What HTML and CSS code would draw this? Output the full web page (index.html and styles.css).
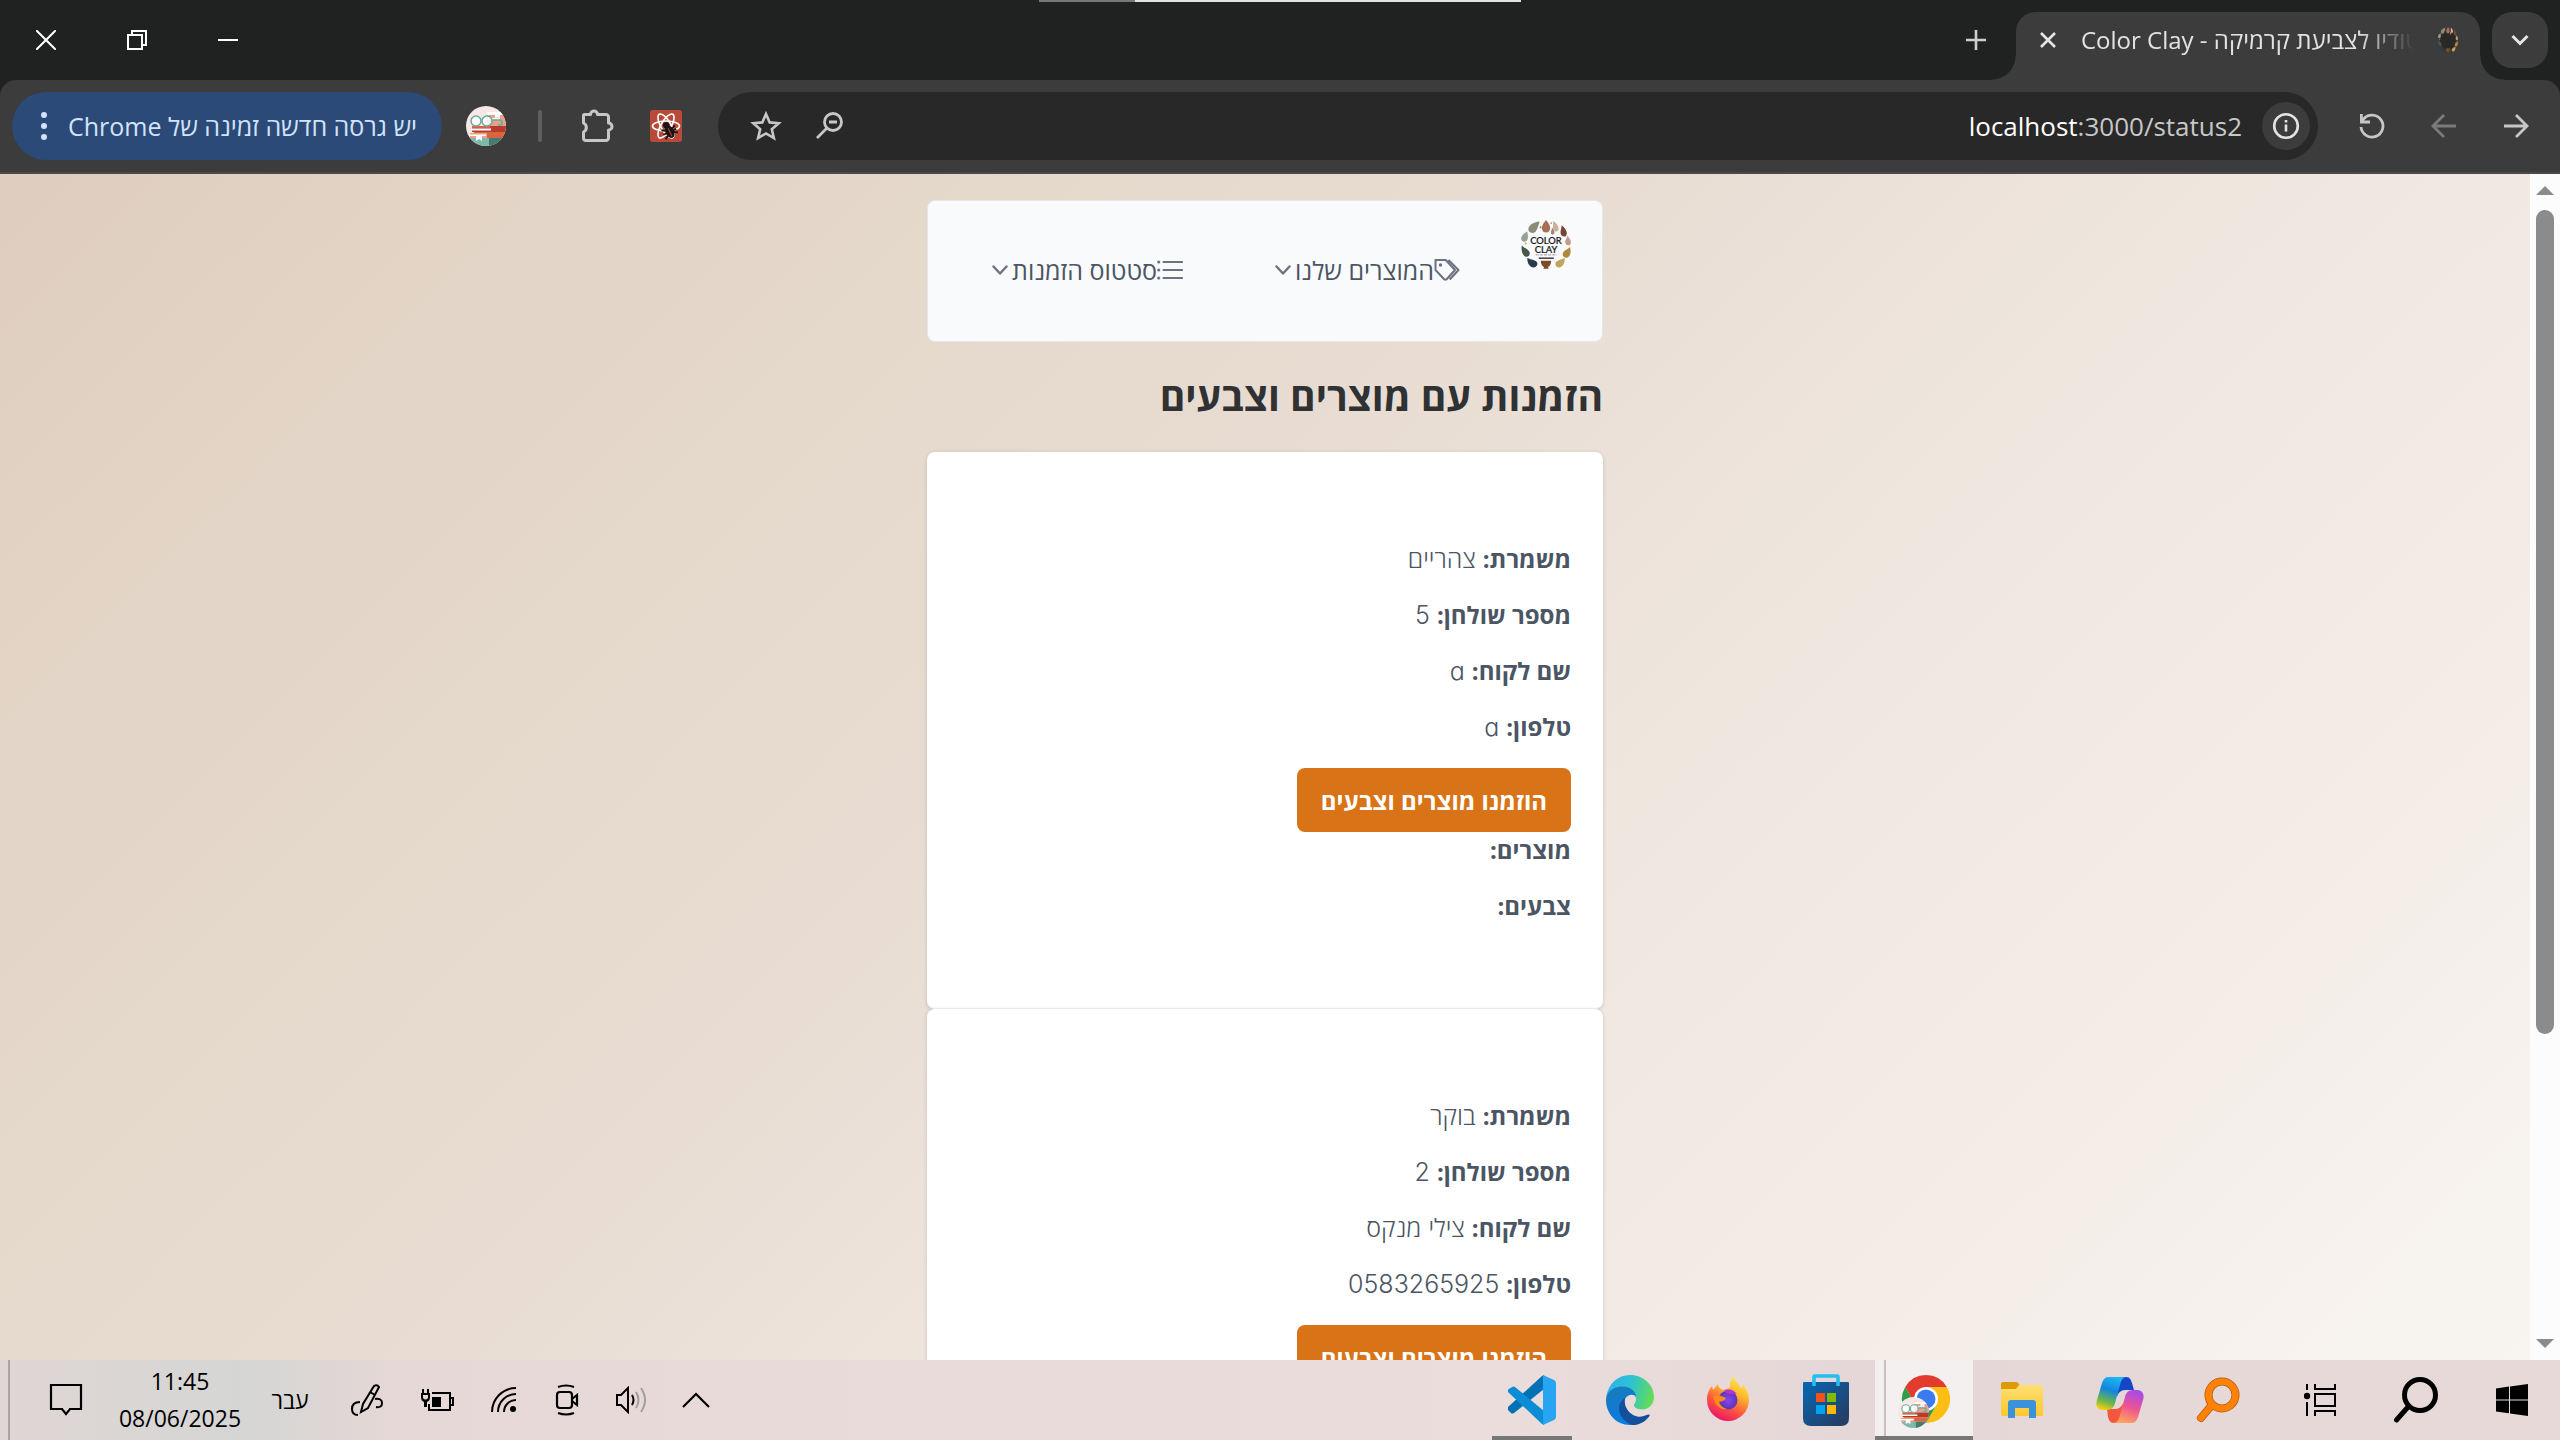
FILE: index.html
```html
<!DOCTYPE html>
<html lang="he" dir="rtl">
<head>
<meta charset="utf-8">
<title>Color Clay - סטודיו לצביעת קרמיקה</title>
<link rel="stylesheet" href="styles.css">
</head>
<body>
<svg class="defs" width="0" height="0" aria-hidden="true">
  <defs>
    <symbol id="clay-ring" viewBox="0 0 48 48">
      <path d="M24 0c2.500 3 4 5.500 4 8a4 4 0 0 1-8 0c0-2.500 1.500-5 4-8z" fill="#a96f55"/>
      <path d="M31 1c3 2 5.500 5 5 8-.6 2.600-4 2.600-5 0-.8-2.500 0-5 0-8z" fill="#cfae9b"/>
      <path d="M39 5c4 3 6 7 4.500 9.800-1.500 2.200-5 1-5.500-1.800-.4-2.600 1-5 1-8z" fill="#774736"/>
      <path d="M44.500 15c3 3 4.300 6.500 2.800 8.500-1.700 1.700-4.600.5-4.800-2-.2-2.200 1.600-4 2-6.500z" fill="#c39a84"/>
      <path d="M47 26c1.400 4.500.5 8-1.800 9.700-2.800 1.500-5.500-.5-5.100-3.400.5-2.900 4.400-3.800 6.900-6.300z" fill="#b0883c"/>
      <path d="M42 36.500c0 4.500-1 7.500-4.200 8.800-2.900 1-5.300-1.300-4.600-4 .9-2.700 5.600-3.100 8.800-4.800z" fill="#c0a55c"/>
      <path d="M6 36.500c0 4.500 1.700 7.800 4.800 8.900 3 .9 5.600-1.500 4.800-4.300-1-2.800-6-2.800-9.600-4.600z" fill="#2b3a4a"/>
      <path d="M.8 24.500c-.8 5 .4 8.500 2.700 10.300 2.600 1.500 5.200-.3 4.900-3.300-.4-2.900-4.800-4.200-7.600-7z" fill="#44574a"/>
      <path d="M6 11c-4.500 2.500-6.300 5-5.700 7.600.7 2.500 4.200 3 5.700.7 1.300-2.100.5-5 0-8.300z" fill="#97a097"/>
      <path d="M18 1.500c-5.500.6-10.200 3-10.900 7-.4 3.300 3.800 5.300 6.600 2.900 2.500-2.200 2.500-5.600 4.300-9.900z" fill="#8a8c76"/>
      <path d="M30 7.500c1.600 2 2.300 4 2 5.300-.7 1.700-2.900 1.400-3.300-.1-.3-1.600.8-3.200 1.300-5.200z" fill="#9c8878"/>
      <circle cx="4.500" cy="22.500" r="1" fill="#c9a94e"/>
      <circle cx="18.800" cy="7" r=".9" fill="#7b8070"/>
      <circle cx="29" cy="3" r=".8" fill="#b4886f"/>
      <path d="M19 39h10c0 3-1.500 5.600-3 6.200l.5 1.600h-5l.6-1.600c-1.800-.8-3.100-3.200-3.100-6.200z" fill="#7e4a26"/>
    </symbol>
    <symbol id="clay-logo" viewBox="0 0 48 48">
      <use href="#clay-ring"/>
      <path d="M17 36h14.500v1.300H17z" fill="#2c2622"/>
      <path d="M14 33.500h20.500" stroke="#777" stroke-width=".7" stroke-dasharray="3 1"/>
      <text x="24" y="23.500" class="logo-text">COLOR</text>
      <text x="24" y="31.500" class="logo-text">CLAY</text>
    </symbol>
    <symbol id="chev" viewBox="0 0 16 16"><path d="M1.500 4.500L8 11.500l6.500-7" fill="none" stroke="currentColor" stroke-width="2.400" stroke-linecap="round" stroke-linejoin="round"/></symbol>
    <clipPath id="avatar-clip"><circle cx="20" cy="20" r="20"/></clipPath>
    <symbol id="avatar" viewBox="0 0 40 40">
      <g clip-path="url(#avatar-clip)">
        <path fill="#f6e9e5" d="M0 0h40v40H0z"/>
        <path fill="#e3a28c" d="M21 6h19v14H21z"/>
        <path fill="#fff" d="M21 6h19v3H21zM29 8h5v5l-2.500-2-2.500 2z"/>
        <path fill="#fff" d="M22 12h12v1.500H22z"/>
        <path fill="#b93a2c" d="M6 20h34v6H6z"/>
        <path fill="#d9604a" d="M6 20h18v2H6z"/>
        <path fill="#fff" d="M5 22.500h20v2H5z"/>
        <path fill="#d9653f" d="M8 26h32v6H8z"/>
        <path fill="#f0a080" d="M4 27h17v5H4z"/>
        <path fill="#fff" d="M3 28.500h17v1.500H3z"/>
        <path fill="#7fb8ab" d="M0 32h40v8H0z"/>
        <path fill="#4a7a6d" d="M23 32h17v8H23z"/>
        <path fill="#fff" d="M10 29h6v6l-3-2-3 2z"/>
        <g fill="#fffc" stroke="#6bab9f" stroke-width="1.500"><circle cx="10" cy="15" r="5"/><circle cx="21" cy="15" r="5"/><path fill="none" d="M26 14h8q3 1 2 4q-2 2-4 1"/></g>
      </g>
    </symbol>
  </defs>
</svg>

<header class="browser">
  <div class="tabstrip">
    <button class="tab-search" aria-label="חיפוש כרטיסיות"><svg width="18" height="16" viewBox="0 0 18 16"><path d="M1.500 4l7.500 7.500L16.500 4" fill="none" stroke="currentColor" stroke-width="3"/></svg></button>
    <div class="tab">
      <svg class="favicon" width="20" height="26" viewBox="0 0 20 26" aria-hidden="true"><ellipse cx="10" cy="13" rx="8" ry="10" fill="#2b2926"/><svg width="20" height="26" viewBox="0 0 48 48" preserveAspectRatio="none"><use href="#clay-ring"/></svg></svg>
      <span class="tab-title" dir="ltr">Color Clay - סטודיו לצביעת קרמיקה</span>
      <button class="plain" aria-label="סגירה"><svg width="18" height="18" viewBox="0 0 18 18"><path d="M2 2l14 14M16 2L2 16" stroke="#e6e6e6" stroke-width="2.600"/></svg></button>
    </div>
    <button class="plain new-tab" aria-label="כרטיסייה חדשה"><svg width="22" height="22" viewBox="0 0 22 22"><path d="M11 1v20M1 11h20" stroke="#d0d0d0" stroke-width="2.600"/></svg></button>
    <div class="loading"></div>
    <div class="window-buttons">
      <button class="plain" aria-label="מזעור"><svg width="20" height="20" viewBox="0 0 20 20"><path d="M0 10h20" stroke="#fff" stroke-width="2"/></svg></button>
      <button class="plain" aria-label="שחזור"><svg width="20" height="20" viewBox="0 0 20 20"><path d="M1 5h14v14H1zM5 5V1h14v14h-4" fill="none" stroke="#fff" stroke-width="2"/></svg></button>
      <button class="plain" aria-label="סגירת חלון"><svg width="20" height="20" viewBox="0 0 20 20"><path d="M0 0l20 20M20 0L0 20" stroke="#fff" stroke-width="2"/></svg></button>
    </div>
  </div>

  <div class="toolbar">
    <div class="nav-buttons">
      <button class="plain" aria-label="הבא"><svg width="28" height="28" viewBox="0 0 28 28"><path d="M2 14h23M14 3l11 11-11 11" fill="none" stroke="#c7c7c7" stroke-width="2.800"/></svg></button>
      <button class="plain" aria-label="הקודם"><svg width="28" height="28" viewBox="0 0 28 28"><path d="M26 14H3M14 3L3 14l11 11" fill="none" stroke="#7b7b7b" stroke-width="2.800"/></svg></button>
      <button class="plain" aria-label="טעינה מחדש"><svg width="28" height="28" viewBox="0 0 28 28"><path d="M3 15a11 11 0 1 0 2.500-8L3 9.500M3.400 2v8H12" fill="none" stroke="#c7c7c7" stroke-width="2.800"/></svg></button>
    </div>
    <div class="omnibox">
      <button class="site-info" aria-label="פרטי האתר"><svg width="28" height="28" viewBox="0 0 28 28"><circle cx="14" cy="14" r="11.800" fill="none" stroke="#e3e3e3" stroke-width="2.600"/><path d="M14 12.500v7M14 8v2.600" stroke="#e3e3e3" stroke-width="2.600"/></svg></button>
      <div class="url" dir="ltr"><b>localhost</b>:3000/status2</div>
      <button class="plain" aria-label="מרחק מתצוגה"><svg width="32" height="32" viewBox="0 0 32 32"><circle cx="19" cy="12" r="8.500" fill="none" stroke="#c7c7c7" stroke-width="2.800"/><path d="M13 18L3 28M15 12h8" stroke="#c7c7c7" stroke-width="2.800" fill="none"/></svg></button>
      <button class="plain" aria-label="הוספה למועדפים"><svg width="32" height="32" viewBox="0 0 32 32"><path d="M16 4l3.700 8.400 9 .8-6.900 6 2.100 8.900-7.900-4.700-7.900 4.700 2.100-8.900-6.900-6 9-.8z" fill="none" stroke="#c7c7c7" stroke-width="2.600"/></svg></button>
    </div>
    <div class="extensions">
      <svg width="32" height="32" viewBox="0 0 32 32" aria-hidden="true"><rect width="32" height="32" rx="3" fill="#b94a37"/><g fill="none" stroke="#fff" stroke-width="1.600"><ellipse cx="16" cy="16" rx="13.500" ry="5"/><ellipse cx="16" cy="16" rx="13.500" ry="5" transform="rotate(60 16 16)"/><ellipse cx="16" cy="16" rx="13.500" ry="5" transform="rotate(120 16 16)"/></g><g transform="rotate(-25 19 20)"><ellipse cx="19" cy="22" rx="4.300" ry="6.500" fill="#1c1414"/><circle cx="18.500" cy="14.500" r="3.200" fill="#1c1414"/><path d="M12 17l14 9M12 27l14-9M12 22h14" stroke="#1c1414" stroke-width="1.800"/><path d="M19 18v9" stroke="#b94a37"/></g></svg>
      <button class="plain" aria-label="תוספים"><svg width="34" height="36" viewBox="0 0 34 36"><path d="M4 6.500h6.500a3.500 3.500 0 0 1 7 0H26a2.500 2.500 0 0 1 2.500 2.500v6a3.500 3.500 0 0 1 0 7v8a2.500 2.500 0 0 1-2.500 2.500H6A2.500 2.500 0 0 1 3.500 30v-6a5 5 0 0 0 0-9V7z" fill="none" stroke="#c7c7c7" stroke-width="3" stroke-linejoin="round"/></svg></button>
    </div>
    <span class="divider"></span>
    <svg width="40" height="40" aria-hidden="true"><use href="#avatar"/></svg>
    <button class="update">יש גרסה חדשה זמינה של Chrome<svg width="8" height="28" viewBox="0 0 8 28"><g fill="#d3e3fd"><circle cx="4" cy="3" r="3"/><circle cx="4" cy="14" r="3"/><circle cx="4" cy="25" r="3"/></g></svg></button>
  </div>
</header>

<div class="viewport">
  <div class="scrollbar" aria-hidden="true">
    <span class="arrow up"></span>
    <span class="track"><span class="thumb"></span></span>
    <span class="arrow down"></span>
  </div>
  <main class="page">
    <div class="content">
      <nav class="menu">
        <svg width="50" height="50" role="img" aria-label="Color Clay"><use href="#clay-logo"/></svg>
        <a class="menu-item" href="#products">
          <svg width="26" height="24" viewBox="0 0 26 24"><path d="M1.500 2h10.200l9.300 10-8.600 9.500h-2L1.500 12zM14.500 2l10 10-8.800 9.500" fill="none" stroke="currentColor" stroke-width="2" stroke-linejoin="round"/><circle cx="6.500" cy="7" r="1.700" fill="currentColor"/></svg>
          <span>המוצרים שלנו</span>
          <svg class="chev" width="16" height="16"><use href="#chev"/></svg>
        </a>
        <a class="menu-item" href="#orders">
          <svg width="26" height="20" viewBox="0 0 26 20"><path d="M6.500 2H25M6.500 10H25M6.500 18H25" stroke="currentColor" stroke-width="2.200" stroke-linecap="round"/><g fill="currentColor"><circle cx="1.700" cy="2" r="1.600"/><circle cx="1.700" cy="10" r="1.600"/><circle cx="1.700" cy="18" r="1.600"/></g></svg>
          <span>סטטוס הזמנות</span>
          <svg class="chev" width="16" height="16"><use href="#chev"/></svg>
        </a>
      </nav>
      <h1>הזמנות עם מוצרים וצבעים</h1>
      <article class="order">
        <p><strong>משמרת:</strong> צהריים</p>
        <p><strong>מספר שולחן:</strong> 5</p>
        <p><strong>שם לקוח:</strong> a</p>
        <p><strong>טלפון:</strong> a</p>
        <button class="status">הוזמנו מוצרים וצבעים</button>
        <p><strong>מוצרים:</strong></p>
        <p><strong>צבעים:</strong></p>
      </article>
      <article class="order">
        <p><strong>משמרת:</strong> בוקר</p>
        <p><strong>מספר שולחן:</strong> 2</p>
        <p><strong>שם לקוח:</strong> צילי מנקס</p>
        <p><strong>טלפון:</strong> 0583265925</p>
        <button class="status">הוזמנו מוצרים וצבעים</button>
      </article>
    </div>
  </main>
</div>

<footer class="taskbar">
  <div class="system">
    <button class="task" aria-label="התחל"><svg width="32" height="32" viewBox="0 0 32 32"><path d="M0 4.500l13-1.900V15.500H0zM14 2.400L32 0v15.500H14zM0 16.500h13v12.800L0 27.500zM14 16.500h18V32l-18-2.400z"/></svg></button>
    <button class="task" aria-label="חיפוש"><svg width="44" height="48" viewBox="0 0 44 48"><circle cx="26" cy="19" r="15.500" fill="none" stroke="#000" stroke-width="5"/><path d="M14 31L2.500 44" stroke="#000" stroke-width="5" stroke-linecap="round"/></svg></button>
    <button class="task" aria-label="תצוגת משימות"><svg width="32" height="32" viewBox="0 0 32 32"><path d="M3 0v6M3 18v14M11 0v5h20V0M11 10h20v12H11zM11 32v-5h20v5" fill="none" stroke="#000" stroke-width="2"/><circle cx="3" cy="12" r="3.200"/></svg></button>
  </div>
  <div class="apps">
    <button class="task" aria-label="Everything"><svg width="44" height="48" viewBox="0 0 44 48"><g fill="none" stroke-linecap="round"><g stroke="#b45a12" stroke-width="8"><circle cx="26" cy="19" r="13.500"/><path d="M15 30L5 42"/></g><g stroke="#ff8204" stroke-width="6.500"><circle cx="26" cy="19" r="13.500"/><path d="M15 30L5 42"/></g></g></svg></button>
    <button class="task" aria-label="Copilot"><svg width="48" height="46" viewBox="0 0 48 46"><defs><linearGradient id="co1" x1=".6" y1="0" x2=".3" y2="1"><stop stop-color="#1fb4f5"/><stop offset=".4" stop-color="#1485dd"/><stop offset=".75" stop-color="#6cb54b"/><stop offset="1" stop-color="#f3cf0e"/></linearGradient><linearGradient id="co2" x1=".6" y1="0" x2=".3" y2="1"><stop stop-color="#a94be8"/><stop offset=".5" stop-color="#ee5490"/><stop offset="1" stop-color="#ffa75c"/></linearGradient></defs><path d="M22 0h8c4 0 5 3 6 6l2 7h-9c-4 0-7 3-8 7z" fill="#1546c8"/><path d="M26 46h-8c-4 0-5-3-6-6l-1-8h9c3 0 6-3 7-6z" fill="#f2583f"/><path d="M12 0h18c-4 1-5 4-6 8l-5 18c-1 4-3 7-8 7H7c-5 0-8-4-6-10L6 6c1-3 3-6 6-6z" fill="url(#co1)"/><path d="M36 46H18c4-1 5-4 6-8l5-18c1-4 3-7 8-7h4c5 0 8 4 6 10l-5 17c-1 3-3 6-6 6z" fill="url(#co2)"/></svg></button>
    <button class="task" aria-label="סייר הקבצים"><svg width="42" height="36" viewBox="0 0 42 36"><defs><linearGradient id="fo" x1="0" y1="0" x2="0" y2="1"><stop stop-color="#ffdf73"/><stop offset="1" stop-color="#fdc72f"/></linearGradient></defs><path d="M0 2q0-2 2-2h13q2 0 3 2l2 3h-4v4H0z" fill="#dc9a04"/><path d="M0 7h15l3-4h22q2 0 2 2v27q0 2-2 2H2q-2 0-2-2z" fill="url(#fo)"/><path d="M7 36V21q0-3 3-3h22q3 0 3 3v15h-7V26H14v10z" fill="#3a93da"/></svg></button>
    <button class="task active" aria-label="Google Chrome"><svg width="52" height="56" viewBox="0 0 52 56"><path d="M28 15h20.800A24 24 0 0 1 28 51l10.500-18z" fill="#fdbd12"/><path d="M7.200 15A24 24 0 0 0 28 51l10.400-18H17.600z" fill="#2a9e4b"/><path d="M7.200 15L17.600 33 28 15h20.800A24 24 0 0 0 7.200 15z" fill="#e33b2e"/><circle cx="28" cy="27" r="12" fill="#fff"/><circle cx="28" cy="27" r="9.500" fill="#3a7bef"/><svg x="0" y="25" width="31" height="31" viewBox="0 0 40 40"><use href="#avatar"/></svg></svg></button>
    <button class="task" aria-label="Microsoft Store"><svg width="46" height="52" viewBox="0 0 46 52"><defs><linearGradient id="st" x1="0" y1="0" x2="1" y2="1"><stop stop-color="#0568b4"/><stop offset="1" stop-color="#29395c"/></linearGradient></defs><path d="M0 9q0-1 1-1h44q1 0 1 1v35q0 8-8 8H8q-8 0-8-8z" fill="url(#st)"/><path d="M11 12V3q0-1 1-1h22q1 0 1 1v9" fill="none" stroke="#25bdf2" stroke-width="3.600"/><path fill="#f3511f" d="M13 19h9v9h-9z"/><path fill="#80ba01" d="M24 19h9v9h-9z"/><path fill="#02a4ef" d="M13 31h9v9h-9z"/><path fill="#ffb901" d="M24 31h9v9h-9z"/></svg></button>
    <button class="task" aria-label="Firefox"><svg width="42" height="46" viewBox="0 0 42 46"><defs><linearGradient id="ff" x1=".8" y1="0" x2=".3" y2="1"><stop stop-color="#fff04a"/><stop offset=".35" stop-color="#ffb52c"/><stop offset=".65" stop-color="#ff5a3a"/><stop offset="1" stop-color="#e8106c"/></linearGradient><radialGradient id="fp"><stop stop-color="#8a45f4"/><stop offset="1" stop-color="#5b34b5"/></radialGradient></defs><path d="M27 0c1 4 5 7 7 11 2-1 2-2 2-3 5 5 6 11 6 15a21 21 0 0 1-42 0c0-5 1-9 5-14l1 4 5-6c0 3 2 5 5 6 3-2 7-1 7-4 0-4 1-7 4-9z" fill="url(#ff)"/><circle cx="21" cy="23" r="9.500" fill="url(#fp)"/><path d="M6 20c4-3 9-1 13 1-1 3-4 3-7 4 1 3 4 6 8 7-6 1-12-3-14-12z" fill="#ff8a1c"/><path d="M17 14c5-3 10-1 13 3-3-1-5 0-7 0-3 0-4-2-6-3z" fill="#b532d8"/></svg></button>
    <button class="task" aria-label="Microsoft Edge"><svg width="48" height="50" viewBox="0 0 48 48" preserveAspectRatio="none"><defs><linearGradient id="e1" x1="0" y1=".3" x2="1" y2=".5"><stop stop-color="#2eb2ee"/><stop offset=".5" stop-color="#2cc3d0"/><stop offset="1" stop-color="#65dc55"/></linearGradient><linearGradient id="e2" x1="0" y1="0" x2=".4" y2="1"><stop stop-color="#1b7ab9"/><stop offset="1" stop-color="#0a7ce0"/></linearGradient></defs><path d="M0 22C2 8 12 0 24 0c14 0 24 10 24 21 0 8-6 12-12 12-5 0-8-2-8-4 0-1 2-3 2-6 0-5-6-10-14-10C8 13 2 17 0 22z" fill="url(#e1)"/><path d="M0 24c0-8 8-13 16-13 9 0 14 5 14 10-2-3-8-3-11 2-2 6 1 17 11 24-2 1-4 1-6 1C10 48 0 37 0 24z" fill="url(#e2)"/><path d="M19 22c-2 9 6 18 15 18 4 0 7-2 9-2 1 0 1 1 0 2-4 5-10 8-16 8-8-2-14-9-14-16 0-5 3-8 6-10z" fill="#124f9c"/></svg></button>
    <button class="task running" aria-label="Visual Studio Code"><svg width="48" height="50" viewBox="0 0 48 50"><path d="M36 0v14L6 38q-2 1-3 0l-3-3q-1-2 0-3L34 1z" fill="#0071b5"/><path d="M0 17q-1-2 1-3l3-2q2-1 3 0l29 24v14l-2-1z" fill="#0a8dd4"/><path d="M35 0l11 5q2 1 2 3v34q0 2-2 3l-11 5z" fill="#27a5f3"/></svg></button>
  </div>
  <div class="tray">
    <span class="tray-icon"><svg width="28" height="16" viewBox="0 0 28 16"><path d="M1 15L14 2l13 13" fill="none" stroke="#000" stroke-width="2.200"/></svg></span>
    <span class="tray-icon"><svg width="34" height="28" viewBox="0 0 34 28" fill="none" stroke="#000" stroke-width="2"><path d="M2 9h4l7-7v24l-7-7H2z"/><path d="M17 9q3 5 0 10"/><path d="M21 6q5 8 0 16M26 2q8 12 0 24" stroke="#a59d9d"/></svg></span>
    <span class="tray-icon"><svg width="26" height="32" viewBox="0 0 26 32" fill="none" stroke="#000" stroke-width="2.200"><rect x="2" y="8" width="15" height="16" rx="3"/><path d="M17 15l5-4v10l-5-4M3 3q8-3 16 0M3 29q8 3 16 0"/></svg></span>
    <span class="tray-icon"><svg width="26" height="26" viewBox="0 0 26 26" fill="none" stroke="#000" stroke-width="2"><path d="M1 25A24 24 0 0 1 25 1M7 25A18 18 0 0 1 25 7M13 25a12 12 0 0 1 12-12"/><circle cx="22" cy="22" r="3" fill="#000" stroke="none"/></svg></span>
    <span class="tray-icon wide"><svg width="34" height="24" viewBox="0 0 34 24"><path d="M12 5h18v17H9v-6M31 10h2v7h-2" fill="none" stroke="#000" stroke-width="2"/><path d="M12 9h9v10H12zM1 5h9v4q0 4-3 5v5H4v-5q-3-1-3-5z"/><path d="M3 1v5M8 1v5" stroke="#000" stroke-width="2"/><path d="M3 7h5v3q-2.500 3-5 0z" fill="#e6d8d7"/></svg></span>
    <span class="tray-icon wide"><svg width="34" height="34" viewBox="0 0 34 34" fill="none" stroke="#000" stroke-width="2"><path d="M11 29l2-8L24 3q3-2 5 1L18 25zM20 9l5 3M10 19q-8 0-8 7 0 6 6 6M25 16q7-1 7 4t-6 4"/></svg></span>
    <span class="lang">עבר</span>
    <time class="clock" datetime="2025-06-08T11:45" dir="ltr"><span>11:45</span><span>08/06/2025</span></time>
    <span class="notify"><svg width="34" height="34" viewBox="0 0 34 34"><path d="M2 2h30v24H21l-4 5-4-5H2z" fill="none" stroke="#000" stroke-width="2.200"/></svg></span>
    <span class="peek"></span>
  </div>
</footer>
</body>
</html>
```
FILE: styles.css
```css
* { box-sizing: border-box; }
body {
  margin: 0;
  height: 100vh;
  display: flex;
  flex-direction: column;
  overflow: hidden;
  font-family: "Open Sans", "Liberation Sans", sans-serif;
  font-size: 24px;
  background: #202221;
}
.defs { position: absolute; }
button { font: inherit; border: 0; padding: 0; margin: 0; }
svg { display: block; flex: none; }
.plain { background: none; display: grid; place-items: center; }
.logo-text { font: 500 9px Lato, sans-serif; fill: #1b1b1b; stroke: #1b1b1b; stroke-width: .2px; text-anchor: middle; direction: ltr; }

/* Browser frame */
.tabstrip {
  display: flex;
  height: 80px;
  padding: 12px 12px 0 0;
  background: #202221;
  position: relative;
}
.tab-search {
  width: 56px;
  height: 56px;
  border-radius: 20px;
  background: #3c3c3c;
  color: #e6e6e6;
  display: grid;
  place-items: center;
}
.tab {
  width: 464px;
  margin-right: 12px;
  padding: 0 22px 12px 23px;
  display: flex;
  align-items: center;
  gap: 24px;
  border-radius: 20px 20px 0 0;
  background: #3c3c3c;
  position: relative;
}
.tab::before, .tab::after {
  content: "";
  position: absolute;
  bottom: 0;
  width: 24px;
  height: 24px;
}
.tab::before { right: -24px; background: radial-gradient(circle at 100% 0, transparent 23px, #3c3c3c 24px); }
.tab::after { left: -24px; background: radial-gradient(circle at 0 0, transparent 23px, #3c3c3c 24px); }
.tab-title {
  flex: 1;
  overflow: hidden;
  white-space: nowrap;
  line-height: 36px;
  color: #e3e3e3;
  -webkit-mask-image: linear-gradient(to left, transparent, #000 56px);
  mask-image: linear-gradient(to left, transparent, #000 56px);
}
.new-tab { width: 80px; padding-bottom: 12px; }
.loading {
  position: absolute;
  top: 0;
  left: 1039px;
  width: 482px;
  height: 2px;
  background: linear-gradient(to right, #777 96px, #e0e4e4 96px);
}
.window-buttons { margin-right: auto; display: flex; padding-bottom: 12px; }
.window-buttons .plain { width: 91px; }
.toolbar {
  display: flex;
  align-items: center;
  height: 94px;
  padding: 0 30px 0 12px;
  border-radius: 16px 16px 0 0;
  border-bottom: 2px solid #4a4a4c;
  background: #3c3c3c;
}
.nav-buttons { display: flex; gap: 44px; margin-left: 40px; }
.omnibox {
  flex: 1;
  display: flex;
  align-items: center;
  gap: 32px;
  height: 68px;
  padding: 0 8px 0 32px;
  border-radius: 34px;
  background: #282828;
}
.site-info { width: 48px; height: 48px; border-radius: 50%; background: #3c3c3c; display: grid; place-items: center; }
.url { flex: 1; margin-right: -12px; text-align: right; font-size: 26px; line-height: 36px; color: #c7c7c7; }
.url b { font-weight: 400; color: #fff; }
.extensions { display: flex; align-items: center; gap: 36px; margin-right: 36px; }
.divider { width: 4px; height: 32px; margin: 0 38px 0 32px; border-radius: 2px; background: #5f5f5f; }
.update {
  display: flex;
  align-items: center;
  gap: 20px;
  height: 68px;
  margin-right: 24px;
  padding: 0 25px 0 28px;
  border-radius: 34px;
  background: #2b4a77;
  color: #d3e3fd;
  font-size: 25px;
  line-height: 36px;
}

/* Page */
.viewport { flex: 1; min-height: 0; display: flex; }
.scrollbar {
  width: 30px;
  padding: 12px 6px;
  display: flex;
  flex-direction: column;
  align-items: center;
  gap: 15px;
  background: #fcfcfc;
}
.arrow { border: 9px solid transparent; border-block-width: 0 9px; border-bottom-color: #8b8b8b; }
.arrow.down { border-block-width: 9px 0; border-top-color: #8b8b8b; }
.track { flex: 1; }
.thumb { display: block; width: 18px; height: 74%; border-radius: 9px; background: #8b8b8b; }
.page {
  flex: 1;
  overflow: hidden;
  background: linear-gradient(135deg, #dfcebf 0%, #e5d9cc 27%, #e8dcd2 42%, #efe6de 60%, #f2eae5 75%, #f8f5f0 100%);
}
.content { width: 676px; margin: 26px auto 0; }
.menu {
  display: flex;
  align-items: flex-start;
  gap: 30px;
  padding: 19px 31px 25px;
  border: 1px solid #e5e7eb;
  border-radius: 8px;
  background: #f9fafc;
}
.menu-item {
  display: flex;
  align-items: center;
  padding: 34px 31px 30px;
  font-size: 25px;
  line-height: 32px;
  color: #4b5563;
  text-decoration: none;
}
.menu-item svg { color: #6b7280; }
.menu-item .chev { margin-right: 4px; }
h1 { margin: 26px 0 28px; font-size: 39px; font-weight: 700; line-height: 56px; color: #2f3133; }
.order {
  display: flex;
  flex-direction: column;
  align-items: flex-start;
  gap: 20px;
  padding: 89px 32px 84px;
  border-bottom: 1px solid #f3f3f3;
  border-radius: 8px;
  background: #fff;
  box-shadow: 0 1px 4px rgb(0 0 0 / .15);
}
.order p {
  height: 36px;
  margin: 0;
  font-family: Inter, "Open Sans", sans-serif;
  font-size: 25px;
  font-weight: 300;
  font-feature-settings: "cv11";
  line-height: 36px;
  color: #4b5563;
}
.order strong { font-family: "Open Sans", sans-serif; font-size: 24px; font-weight: 700; }
.status {
  height: 64px;
  margin: 3px 0 -20px;
  padding: 0 24px;
  border-radius: 8px;
  background: #d97317;
  color: #fff;
  font-weight: 700;
}

/* Taskbar */
.taskbar {
  display: flex;
  height: 80px;
  background: linear-gradient(to right, #dfd6d5 0, #d5d6d4 240px, #d9d6d4 290px, #e6d8d7 400px, #ebdddc 1500px, #e5d7d7 1850px, #e7d9d8 100%);
}
.system, .apps, .tray { display: flex; }
.apps { margin-right: 5px; }
.system .task { width: 96px; }
.task {
  width: 98px;
  display: grid;
  place-items: center;
  background: none;
}
.task.active { background: linear-gradient(to right, #f4eeee 9px, #c9bfbf 9px 11px, #f5f0f0 11px); box-shadow: inset 0 -4px #777; }
.task.running { background: linear-gradient(#777, #777) center bottom / 80px 4px no-repeat; }
.tray { margin-right: auto; align-items: center; color: #000; font-size: 23px; }
.tray-icon { width: 64px; display: grid; place-items: center; }
.tray-icon.wide { width: 70px; }
.lang { width: 84px; text-align: center; }
.clock { width: 136px; display: grid; text-align: center; line-height: 37px; }
.notify { width: 92px; display: grid; place-items: center; }
.peek { align-self: stretch; width: 12px; margin-left: 8px; border-left: 2px solid #aaa4a4; }
```
